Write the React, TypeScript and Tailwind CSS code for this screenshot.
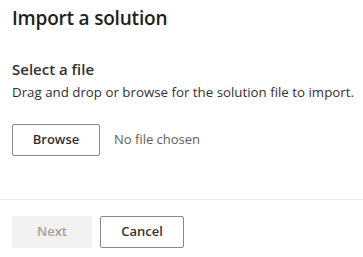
import React from "react";

const App: React.FC = () => {
  return (
    <div
      className="flex flex-col w-[363px] h-[257px] bg-white text-[#323130]"
      style={{ fontFamily: '"Open Sans", "Noto Sans", sans-serif' }}
    >
      {/* Header */}
      <div className="px-3 pt-[4px]">
        <h1 className="text-[19px] leading-[28px] font-semibold tracking-[-0.2px] text-[#201f1e]">
          Import a solution
        </h1>
      </div>

      {/* Body */}
      <div className="flex-1 px-3 pt-[26px]">
        <h2 className="text-[15px] leading-[22px] font-semibold">Select a file</h2>
        <p className="text-[13.3px] leading-[20px] mt-[2px] whitespace-nowrap">
          Drag and drop or browse for the solution file to import.
        </p>
        <div className="flex items-center gap-[14px] mt-[22px]">
          <button className="w-[88px] h-[32px] border border-[#8a8886] rounded-[2px] bg-white text-[13px] font-semibold">
            Browse
          </button>
          <span className="text-[13px] text-[#605e5c]">No file chosen</span>
        </div>
      </div>

      {/* Footer */}
      <div className="border-t border-[#edebe9] px-3 pt-4 pb-[9px] flex gap-2">
        <button
          disabled
          className="w-[80px] h-[32px] rounded-[2px] bg-[#f3f2f1] text-[#a19f9d] text-[13px] font-semibold"
        >
          Next
        </button>
        <button className="w-[84px] h-[32px] border border-[#8a8886] rounded-[2px] bg-white text-[13px] font-semibold">
          Cancel
        </button>
      </div>
    </div>
  );
};

export default App;
